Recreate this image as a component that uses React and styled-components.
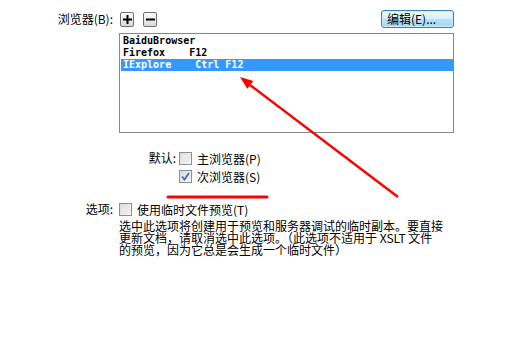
import styled, { createGlobalStyle } from 'styled-components';

const GlobalStyle = createGlobalStyle`
body{
  margin:0;
  background:#fff;
  font-family:"Noto Sans CJK SC", "Liberation Sans", sans-serif;
  font-size:12px;
  color:#000;
}
`;

const Page = styled.div`
position:relative;
width:531px;
height:364px;
padding-top:10px;
box-sizing:border-box;
overflow:hidden;
`;

const Form = styled.div`
display:grid;
grid-template-columns:113px 335px;
column-gap:6px;
row-gap:15px;
`;

const Label = styled.div`
text-align:right;
line-height:18px;
height:18px;
white-space:nowrap;
`;

const Field = styled.div`
display:flex;
flex-direction:column;
`;

const Toolbar = styled.div`
display:flex;
align-items:center;
height:18px;
gap:9px;
padding-left:1px;
`;

const IconButton = styled.div`
width:14px;
height:15px;
box-sizing:border-box;
border:1px solid #6f6f6f;
border-radius:2px;
background:linear-gradient(#fbfbfb, #d9d9d9);
display:flex;
align-items:center;
justify-content:center;
`;

const EditButton = styled.div`
margin-left:auto;
width:73px;
height:18px;
box-sizing:border-box;
border:1px solid #3a7fb5;
border-radius:3px;
background:linear-gradient(#eef8fe 0%, #d6effc 50%, #b5e1f8 51%, #a6d8f4 100%);
box-shadow:inset 0 0 0 1px #c9ecff;
line-height:16px;
padding-left:5px;
white-space:nowrap;
`;

const ListBox = styled.div`
margin-top:5px;
height:100px;
box-sizing:border-box;
border:1px solid #828790;
padding:1px 0 0 1px;
font-family:"DejaVu Sans Mono", "Liberation Mono", monospace;
font-size:10px;
font-weight:bold;
`;

const ListRow = styled.div`
height:12px;
line-height:12px;
padding-left:2px;
white-space:pre;
background:${p => (p.$selected ? '#3399ff' : 'transparent')};
color:${p => (p.$selected ? '#fff' : '#000')};
`;

const DefaultGroup = styled.div`
display:flex;
margin-top:16px;
gap:3px;
`;

const GroupLabel = styled.div`
width:57px;
text-align:right;
line-height:18px;
`;

const CheckList = styled.div`
display:flex;
flex-direction:column;
`;

const CheckRow = styled.label`
display:flex;
align-items:center;
height:18px;
gap:5px;
white-space:nowrap;
`;

const Box = styled.span`
width:13px;
height:13px;
box-sizing:border-box;
border:1px solid #8d8f92;
background:linear-gradient(135deg, #dcdcd6, #f6f6f4);
display:flex;
align-items:center;
justify-content:center;
`;

const Note = styled.div`
margin-top:2px;
line-height:12px;
white-space:nowrap;
span{
  display:block;
}
`;

const Overlay = styled.svg`
position:absolute;
left:0;
top:0;
pointer-events:none;
`;

function Check({ checked, children }) {
  return (
    <CheckRow>
      <Box>
        {checked ? (
          <svg width="9" height="9" viewBox="0 0 9 9">
            <path d="M1 4.5 L3.5 7.5 L8 1" fill="none" stroke="#3d6fb6" strokeWidth="1.8" />
          </svg>
        ) : (
          <svg width="9" height="9" viewBox="0 0 9 9">
            <rect x="1" y="1" width="7" height="7" fill="#e9e9e6" />
          </svg>
        )}
      </Box>
      {children}
    </CheckRow>
  );
}

const browsers = [
  { name: 'BaiduBrowser' },
  { name: 'Firefox    F12' },
  { name: 'IExplore    Ctrl F12', selected: true },
];

export default function App() {
  return (
    <Page>
      <GlobalStyle />
      <Form>
        <Label>浏览器(B):</Label>
        <Field>
          <Toolbar>
            <IconButton>
              <svg width="9" height="9" viewBox="0 0 9 9">
                <path d="M0 4.5 H9 M4.5 0 V9" stroke="#000" strokeWidth="2" />
              </svg>
            </IconButton>
            <IconButton>
              <svg width="9" height="9" viewBox="0 0 9 9">
                <path d="M0 4.5 H9" stroke="#000" strokeWidth="2" />
              </svg>
            </IconButton>
            <EditButton>编辑(E)...</EditButton>
          </Toolbar>
          <ListBox>
            {browsers.map(b => (
              <ListRow key={b.name} $selected={b.selected}>{b.name}</ListRow>
            ))}
          </ListBox>
          <DefaultGroup>
            <GroupLabel>默认:</GroupLabel>
            <CheckList>
              <Check>主浏览器(P)</Check>
              <Check checked>次浏览器(S)</Check>
            </CheckList>
          </DefaultGroup>
        </Field>
        <Label>选项:</Label>
        <Field>
          <Check>使用临时文件预览(T)</Check>
          <Note>
            <span>选中此选项将创建用于预览和服务器调试的临时副本。要直接</span>
            <span>更新文档，请取消选中此选项。（此选项不适用于 XSLT 文件</span>
            <span>的预览，因为它总是会生成一个临时文件）</span>
          </Note>
        </Field>
      </Form>
      <Overlay width="531" height="364">
        <line x1="398" y1="197" x2="250" y2="85" stroke="#f00" strokeWidth="2.5" />
        <polygon points="240,77 253.4,80.9 247.3,88.8" fill="#f00" />
        <line x1="168" y1="197" x2="267" y2="197" stroke="#f00" strokeWidth="3" strokeLinecap="round" />
      </Overlay>
    </Page>
  );
}
